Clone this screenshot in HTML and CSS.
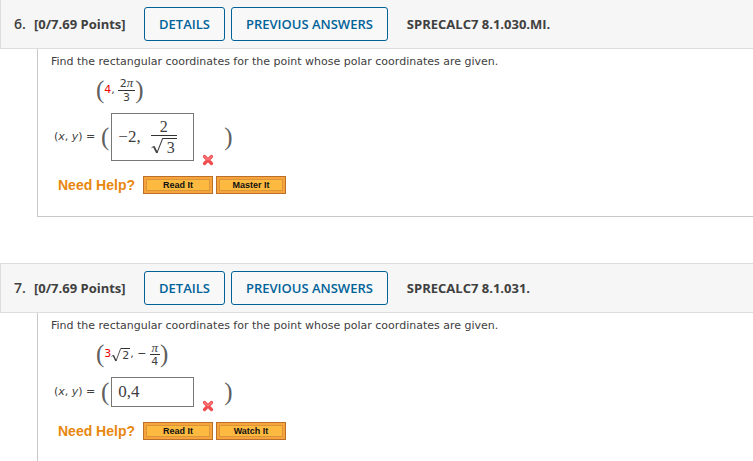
FILE: index.html
```html
<!DOCTYPE html>
<html lang="en">
<head>
<meta charset="utf-8">
<title>Polar Coordinates Homework</title>
<link rel="stylesheet" href="styles.css">
</head>
<body>
<svg class="defs" aria-hidden="true">
  <symbol id="wrong" viewBox="0 0 12 12">
    <path d="M2.5 2.5 9.5 9.5M9.5 2.5 2.5 9.5" fill="none" stroke="#f04c50" stroke-width="3.2" stroke-linecap="round"/>
    <path d="M2.5 2.5 6 6 9.5 2.5" fill="none" stroke="#f87f80" stroke-width="1.2" stroke-linecap="round"/>
  </symbol>
  <symbol id="radical" viewBox="0 0 10 14" preserveAspectRatio="none">
    <path d="M0.5 8.5 2.3 7.3" fill="none" stroke="currentColor" stroke-width="0.8"/>
    <path d="M2.3 7.3 5 13" fill="none" stroke="currentColor" stroke-width="1.5"/>
    <path d="M5 13 9.7 0.5H10" fill="none" stroke="currentColor" stroke-width="0.9"/>
  </symbol>
</svg>
<main>
  <section class="question">
    <header class="bar">
      <span class="number">6.</span>
      <span class="points">[0/7.69 Points]</span>
      <button class="action" type="button">DETAILS</button>
      <button class="action" type="button">PREVIOUS ANSWERS</button>
      <span class="code">SPRECALC7 8.1.030.MI.</span>
    </header>
    <div class="content">
      <p class="prompt">Find the rectangular coordinates for the point whose polar coordinates are given.</p>
      <div class="given">
        <span class="paren">(</span>
        <span class="lead"><span class="value">4</span>,</span>
        <span class="frac"><span class="top">2<span class="pi">π</span></span><span>3</span></span>
        <span class="paren">)</span>
      </div>
      <div class="answer">
        <span class="label" id="label6">(<i>x</i>, <i>y</i>) =</span>
        <span class="paren">(</span>
        <div class="entry" role="textbox" tabindex="0" aria-labelledby="label6">
          <span class="lead">−2,</span>
          <span class="frac large"><span class="top">2</span><span class="root"><svg class="sign"><use href="#radical"/></svg><span class="radicand">3</span></span></span>
        </div>
        <svg class="mark" role="img" aria-label="Incorrect"><use href="#wrong"/></svg>
        <span class="paren">)</span>
      </div>
      <div class="help">
        <span class="need">Need Help?</span>
        <button class="resource" type="button">Read It</button>
        <button class="resource" type="button">Master It</button>
      </div>
    </div>
  </section>
  <section class="question">
    <header class="bar">
      <span class="number">7.</span>
      <span class="points">[0/7.69 Points]</span>
      <button class="action" type="button">DETAILS</button>
      <button class="action" type="button">PREVIOUS ANSWERS</button>
      <span class="code">SPRECALC7 8.1.031.</span>
    </header>
    <div class="content">
      <p class="prompt">Find the rectangular coordinates for the point whose polar coordinates are given.</p>
      <div class="given">
        <span class="paren">(</span>
        <span class="value">3</span>
        <span class="root"><svg class="sign"><use href="#radical"/></svg><span class="radicand">2</span></span>
        <span class="lead">, −</span>
        <span class="frac"><span class="top pi">π</span><span>4</span></span>
        <span class="paren">)</span>
      </div>
      <div class="answer">
        <label class="label" for="answer7">(<i>x</i>, <i>y</i>) =</label>
        <span class="paren">(</span>
        <input class="entry" id="answer7" type="text" value="0,4">
        <svg class="mark" role="img" aria-label="Incorrect"><use href="#wrong"/></svg>
        <span class="paren">)</span>
      </div>
      <div class="help">
        <span class="need">Need Help?</span>
        <button class="resource" type="button">Read It</button>
        <button class="resource" type="button">Watch It</button>
      </div>
    </div>
  </section>
</main>
</body>
</html>
```
FILE: styles.css
```css
* { box-sizing: border-box; }

body {
  margin: 0;
  background: #fff;
  color: #404040;
  font: 11px/18px "DejaVu Sans", sans-serif;
}

.defs { position: absolute; width: 0; height: 0; }

main { overflow: hidden; }

.question + .question { margin-top: 46px; }
.question:first-child { margin-top: -1px; }

.bar {
  display: flex;
  align-items: center;
  padding: 7px 13px;
  border: 1px solid #ddd;
  border-right: 0;
  background: #f6f6f6;
  font: bold 13px/18px "Open Sans", sans-serif;
  white-space: nowrap;
}

.number {
  width: 20px;
  font-size: 14px;
  font-weight: 600;
}

.points { width: 110px; }

.action {
  height: 34px;
  margin-right: 6px;
  padding: 0 14px;
  border: 1px solid #006298;
  border-radius: 3px;
  background: #f8f8f8;
  color: #006298;
  font: 600 13px/18px "Open Sans", sans-serif;
}

.code { margin-left: 13px; }

.content {
  margin-left: 37px;
  padding: 4px 0 22px 13px;
  border: solid #c8c8c8;
  border-width: 0 0 1px 1px;
}

.question:last-child .content { border-bottom: 0; }

.prompt { margin: 0; }

.given,
.answer,
.help {
  display: flex;
  align-items: center;
}

.given {
  height: 24px;
  margin: 7px 0 11px 45px;
}

.paren {
  color: #606060;
  font: 25px/24px "Liberation Serif", serif;
}

.value { color: #e00; }
.lead { white-space: pre; }

.frac {
  display: inline-flex;
  flex-direction: column;
  align-items: center;
  margin-left: 3px;
  line-height: 13px;
}

.top {
  align-self: stretch;
  padding: 0 2px;
  border-bottom: 1px solid #333;
  text-align: center;
}

.pi { font-family: "Liberation Serif", serif; font-size: 13px; font-style: italic; }

.root { display: inline-flex; padding-top: 2px; }
.sign { width: 10px; height: 14px; }

.radicand {
  padding: 0 1px;
  border-top: 1px solid #333;
  line-height: 14px;
}

.answer { margin-left: 3px; }
.label { width: 47px; white-space: nowrap; }

.entry {
  display: flex;
  align-items: center;
  width: 83px;
  height: 30px;
  margin-left: 2px;
  padding: 0 6px;
  border: 1px solid #777;
  background: #fff;
  color: #404040;
  font: 17px/18px "Liberation Serif", serif;
}

div.entry { height: 48px; }

.large { margin-left: 10px; font-size: 16px; line-height: 16px; }
.large .sign { width: 12px; height: 16px; }
.large .radicand { padding: 0 2px 0 4px; line-height: 17px; }

.mark {
  align-self: flex-end;
  width: 12px;
  height: 12px;
  margin: 0 10px -5px 8px;
}

.help { margin: 15px 0 0 7px; }

.need {
  width: 85px;
  color: #e8870e;
  font: bold 14px/18px "Liberation Sans", sans-serif;
}

.resource {
  width: 70px;
  height: 18px;
  margin-right: 3px;
  padding: 0;
  border: 1px solid #b8702a;
  background: #fdb940;
  box-shadow: inset 0 0 0 2px #f9a33c, inset 0 0 0 3px #d9953a;
  color: #111;
  font: bold 9px/16px "Liberation Sans", sans-serif;
}
```
